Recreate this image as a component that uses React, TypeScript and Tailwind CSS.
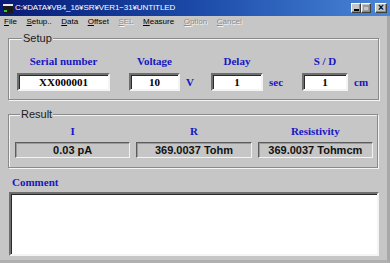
import React from 'react';

const sunken =
  'border-2 border-t-[#6e6e6e] border-l-[#6e6e6e] border-b-[#f4f4f4] border-r-[#f4f4f4] shadow-[inset_1px_1px_0_#2a2a2a]';

const Field: React.FC<{ label: string; value: string; w: string; unit?: string; colW: string }> = ({
  label,
  value,
  w,
  unit,
  colW,
}) => (
  <div className={`flex flex-col ${colW}`}>
    <div className={`${w} text-center text-[11px] leading-[13px] font-bold text-[#1616c4]`}>{label}</div>
    <div className="mt-[5px] flex items-center">
      <div
        className={`${w} h-[18px] bg-white ${sunken} flex items-center justify-center text-[11px] font-bold text-black`}
      >
        {value}
      </div>
      {unit && <span className="ml-[6px] text-[11px] font-bold text-[#1616c4]">{unit}</span>}
    </div>
  </div>
);

const ResultBox: React.FC<{ label: string; value: string }> = ({ label, value }) => (
  <div className="flex flex-col items-center">
    <div className="h-[13px] leading-[13px] text-[11px] font-bold text-[#1616c4]">{label}</div>
    <div
      className="mt-[4px] w-full h-[16px] flex items-center justify-center border border-t-[#5c5c5c] border-l-[#5c5c5c] border-b-[#f2f2f2] border-r-[#f2f2f2] shadow-[inset_1px_1px_0_#9a9a9a] text-[11px] font-bold text-[#111] font-['Liberation_Sans',Arial,sans-serif]"
    >
      {value}
    </div>
  </div>
);

const menu: { label: string; disabled?: boolean }[] = [
  { label: 'File' },
  { label: 'Setup..' },
  { label: 'Data' },
  { label: 'Offset' },
  { label: 'SEL', disabled: true },
  { label: 'Measure' },
  { label: 'Option', disabled: true },
  { label: 'Cancel', disabled: true },
];

const btn =
  'h-[10px] bg-[#c6c6c6] border border-t-white border-l-white border-b-[#404040] border-r-[#404040] shadow-[inset_-1px_-1px_0_#8a8a8a]';

export default function App() {
  return (
    <div className="w-[390px] h-[263px] overflow-hidden bg-[#c6c6c6] flex flex-col font-['Liberation_Sans',Arial,sans-serif]">
      {/* Title bar */}
      <div className="h-[16px] shrink-0 flex items-center bg-gradient-to-r from-[#0a1a78] via-[#1c4aa8] to-[#4a86d8] pl-[3px] pr-[3px]">
        <div className="w-[10px] h-[9px] bg-[#1a1a1a] border-t-2 border-t-[#e8e8e8] flex items-end">
          <div className="w-[3px] h-[2px] bg-[#3bbf3b] ml-[1px] mb-[1px]" />
        </div>
        <span className="ml-[2px] text-[8px] leading-none text-white tracking-[-0.1px]">
          C:¥DATA¥VB4_16¥SR¥VER1−31¥UNTITLED
        </span>
        <div className="ml-auto flex items-center">
          <div className={`w-[10px] ${btn} flex items-end justify-center`}>
            <div className="w-[5px] h-[2px] bg-black mb-[1px]" />
          </div>
          <div className={`w-[10px] ${btn} flex items-center justify-center`}>
            <div className="w-[6px] h-[6px] border border-[#9a9a9a] border-t-2" />
          </div>
          <div
            className={`ml-[4px] w-[12px] ${btn} flex items-center justify-center text-[10px] font-bold leading-none text-black`}
          >
            ×
          </div>
        </div>
      </div>

      <div className="flex-1 flex flex-col border-r-[3px] border-r-[#a8a8a8] border-b-[3px] border-b-[#b0b0b0]">
        {/* Menu bar */}
        <div className="h-[11px] shrink-0 flex items-center gap-[9.5px] pl-[4px] text-[8px] leading-none">
          {menu.map((m) => (
            <span
              key={m.label}
              className={m.disabled ? 'text-[#8e8e8e] [text-shadow:1px_1px_0_#f4f4f4]' : 'text-black'}
            >
              <span className="underline">{m.label[0]}</span>
              {m.label.slice(1)}
            </span>
          ))}
        </div>

        <div className="flex flex-col pl-[8px] pr-[8px] font-['Liberation_Serif','Times_New_Roman',serif]">
          {/* Setup */}
          <fieldset className="mt-[5px] border border-[#8a8a8a] shadow-[inset_1px_1px_0_#f4f4f4,1px_1px_0_#f4f4f4] pl-[8px] pt-[10px] pb-[8px]">
            <legend className="ml-[5px] px-[1px] bg-[#c6c6c6] text-[11px] leading-[13px] text-[#1c1c1c] font-['Liberation_Sans',Arial,sans-serif]">
              Setup
            </legend>
            <div className="flex">
              <Field label="Serial number" value="XX000001" w="w-[93px]" colW="w-[112px]" />
              <Field label="Voltage" value="10" w="w-[51px]" unit="V" colW="w-[82px]" />
              <Field label="Delay" value="1" w="w-[52px]" unit="sec" colW="w-[91px]" />
              <Field label="S / D" value="1" w="w-[46px]" unit="cm" colW="flex-1" />
            </div>
          </fieldset>

          {/* Result */}
          <fieldset className="mt-[8px] mr-[1px] border border-[#8a8a8a] shadow-[inset_1px_1px_0_#f4f4f4,1px_1px_0_#f4f4f4] pl-[6px] pr-[4px] pt-[4px] pb-[9px]">
            <legend className="ml-[5px] px-[1px] bg-[#c6c6c6] text-[11px] leading-[13px] text-[#1c1c1c] font-['Liberation_Sans',Arial,sans-serif]">
              Result
            </legend>
            <div className="grid grid-cols-3 gap-[6px]">
              <ResultBox label="I" value="0.03 pA" />
              <ResultBox label="R" value="369.0037 Tohm" />
              <ResultBox label="Resistivity" value="369.0037 Tohmcm" />
            </div>
          </fieldset>

          {/* Comment */}
          <div className="mt-[8px] ml-[4px] h-[13px] leading-[13px] text-[11px] font-bold text-[#1616c4]">Comment</div>
          <div className={`mt-[3px] ml-[1px] h-[64px] bg-white ${sunken}`} />
        </div>
      </div>
    </div>
  );
}
